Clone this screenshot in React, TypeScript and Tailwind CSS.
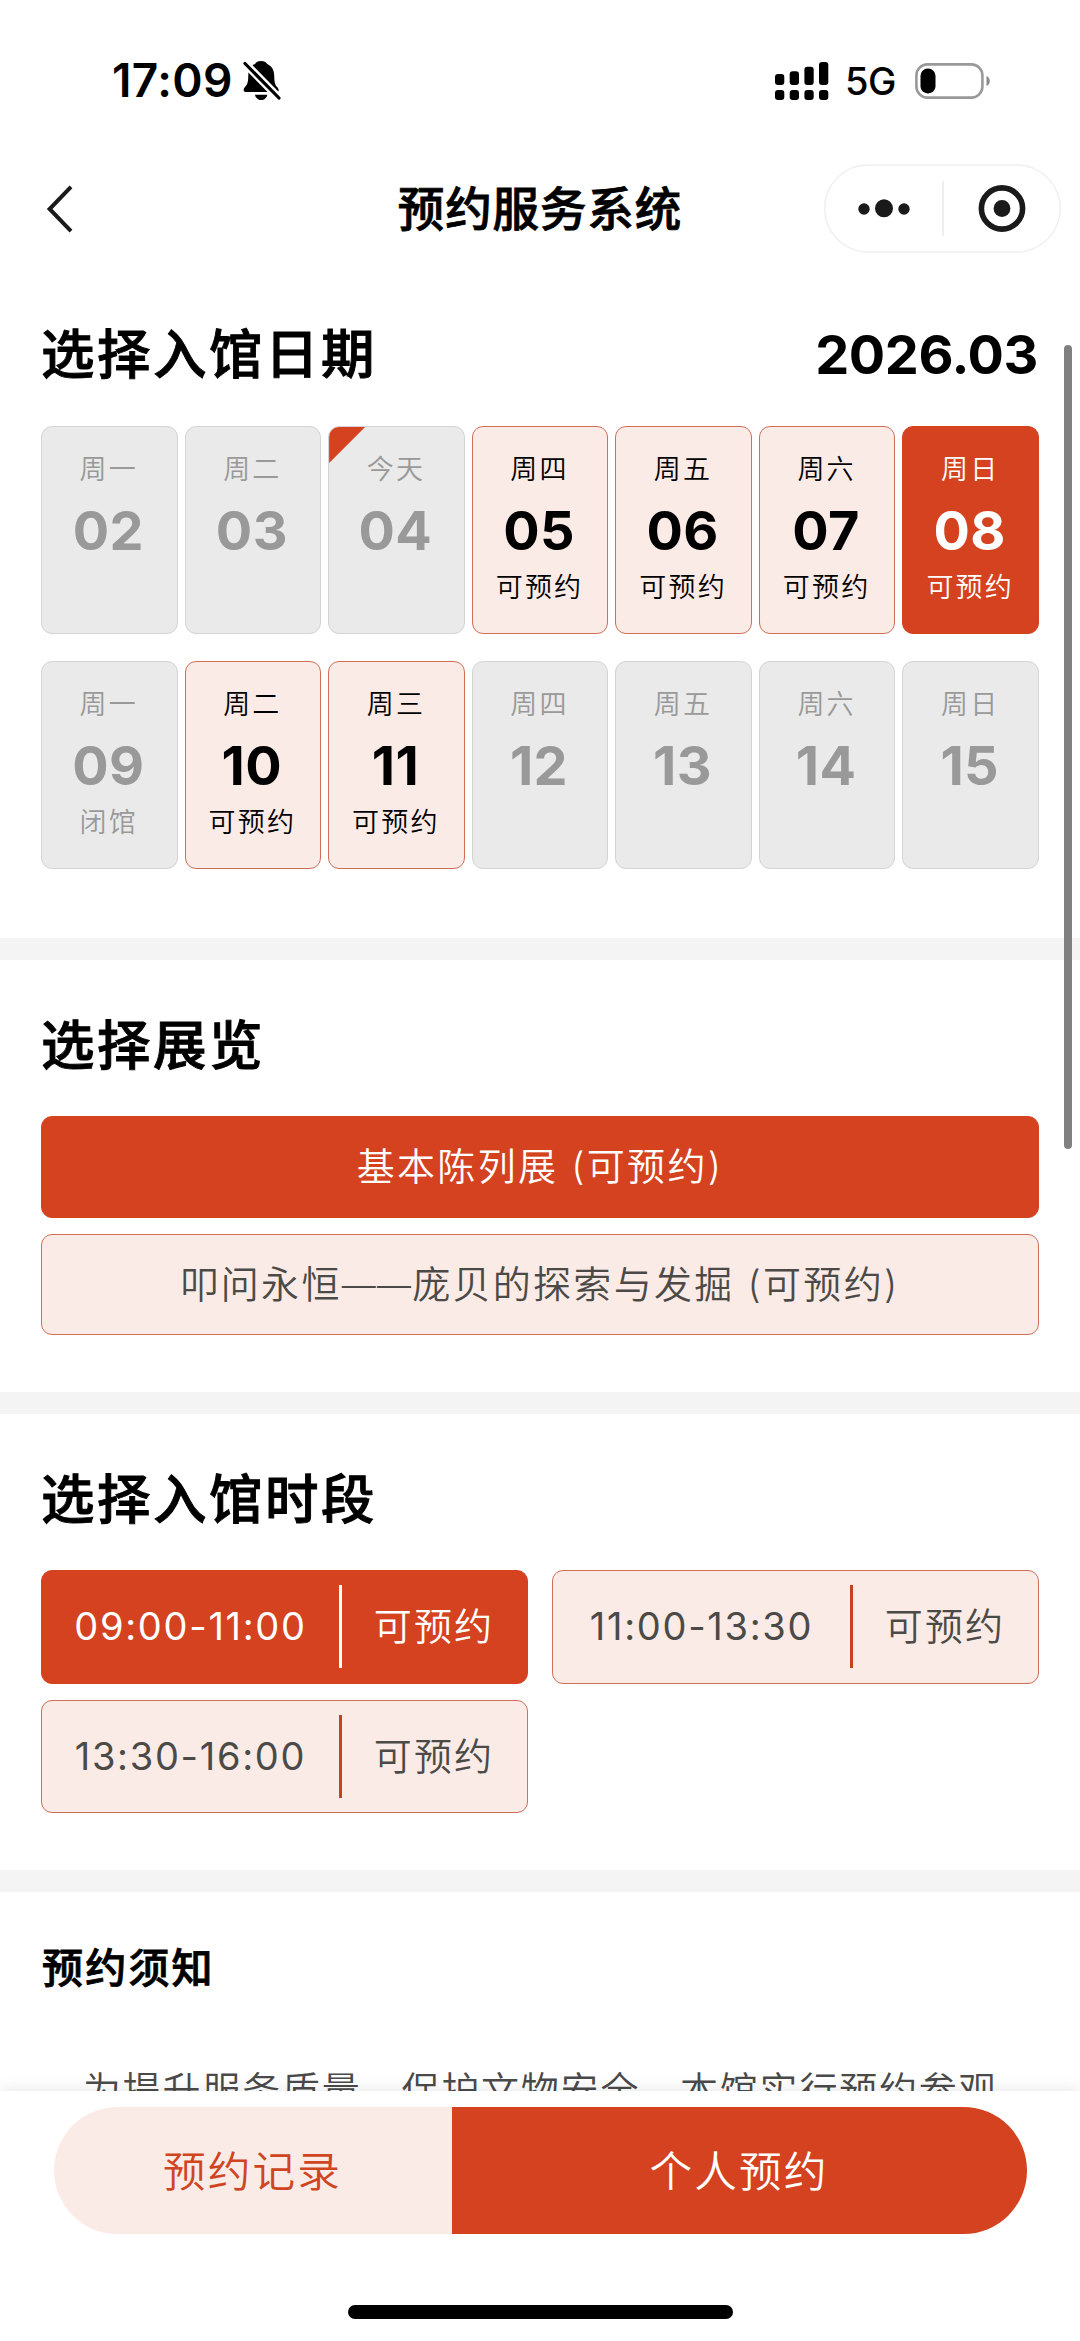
import type { ReactNode } from "react";
import { clsx } from "clsx";

type DayState = "disabled" | "open" | "selected";

interface Day {
  weekday: string;
  date: string;
  state: DayState;
  note?: string;
  isToday?: boolean;
}

const days: Day[] = [
  { weekday: "周一", date: "02", state: "disabled" },
  { weekday: "周二", date: "03", state: "disabled" },
  { weekday: "今天", date: "04", state: "disabled", isToday: true },
  { weekday: "周四", date: "05", state: "open", note: "可预约" },
  { weekday: "周五", date: "06", state: "open", note: "可预约" },
  { weekday: "周六", date: "07", state: "open", note: "可预约" },
  { weekday: "周日", date: "08", state: "selected", note: "可预约" },
  { weekday: "周一", date: "09", state: "disabled", note: "闭馆" },
  { weekday: "周二", date: "10", state: "open", note: "可预约" },
  { weekday: "周三", date: "11", state: "open", note: "可预约" },
  { weekday: "周四", date: "12", state: "disabled" },
  { weekday: "周五", date: "13", state: "disabled" },
  { weekday: "周六", date: "14", state: "disabled" },
  { weekday: "周日", date: "15", state: "disabled" }
];

const exhibitions = [
  { id: "permanent", name: <>基本陈列展 (可预约)</>, selected: true },
  {
    id: "pompeii",
    name: (
      <>
        叩问永恒<span className="text-[34px] tracking-[1.2px]">——</span>庞贝的探索与发掘 (可预约)
      </>
    ),
    selected: false
  }
];

const slots = [
  { time: "09:00-11:00", selected: true },
  { time: "11:00-13:30", selected: false },
  { time: "13:30-16:00", selected: false }
];

export default function App() {
  return (
    <div className="relative flex h-[2341px] w-[1080px] flex-col overflow-hidden bg-white font-['Inter','Noto_Sans_CJK_SC',sans-serif] text-black">
      <StatusBar />
      <NavBar />

      <main className="min-h-0 flex-1 overflow-hidden tracking-[2.2px]">
        <section className="px-[41px] pb-[69px] pt-[63px]">
          <div className="flex items-center justify-between">
            <SectionTitle>选择入馆日期</SectionTitle>
            <span className="pr-px text-[54px] font-bold leading-[72px] tracking-[-0.4px]">2026.03</span>
          </div>
          <div className="mt-[35px] grid grid-cols-7 gap-x-[7px] gap-y-[27.6px]">
            {days.map((day) => (
              <DayCard key={day.date} day={day} />
            ))}
          </div>
        </section>

        <Divider />

        <section className="px-[41px] pb-[57px] pt-[50px]">
          <SectionTitle>选择展览</SectionTitle>
          <div className="mt-[34px] flex flex-col gap-4">
            {exhibitions.map((item) => (
              <button
                key={item.id}
                className={clsx(
                  "h-[101.5px] rounded-[11px] border text-[38px] font-[350] tracking-[2.3px]",
                  item.selected
                    ? "border-[#d44220] bg-[#d44220] text-white"
                    : "border-[#cf6f58] bg-[#fbebe7] text-[#4b4a46]"
                )}
              >
                {item.name}
              </button>
            ))}
          </div>
        </section>

        <Divider />

        <section className="px-[41px] pb-[57px] pt-[50px]">
          <SectionTitle>选择入馆时段</SectionTitle>
          <div className="mt-[34px] grid grid-cols-2 gap-x-6 gap-y-4">
            {slots.map((slot) => (
              <button
                key={slot.time}
                className={clsx(
                  "flex h-[113.5px] items-center rounded-[11px] border text-[38px]",
                  slot.selected
                    ? "border-[#d44220] bg-[#d44220] text-white"
                    : "border-[#cf6f58] bg-[#fbebe7] text-[#4b4a46]"
                )}
              >
                <span className="flex-1 text-center tracking-[1.7px]">{slot.time}</span>
                <span className={clsx("h-[83px] w-[3px]", slot.selected ? "bg-white" : "bg-[#c6421f]")} />
                <span className="w-[185px] pr-px text-center font-[350]">可预约</span>
              </button>
            ))}
          </div>
        </section>

        <Divider />

        <section className="px-[42px] pt-[46px]">
          <h3 className="text-[41px] font-medium leading-[60px] [-webkit-text-stroke:0.8px]">预约须知</h3>
          <p className="mt-[62px] whitespace-nowrap pl-[41px] text-[38px] font-[350] leading-[60px] tracking-[1.8px] text-[#4b4a4a]">
            为提升服务质量、保护文物安全，本馆实行预约参观
          </p>
        </section>
      </main>

      <footer className="relative flex h-[250px] shrink-0 flex-col items-center bg-white pt-4 shadow-[0_-2px_14px_rgba(0,0,0,0.09)]">
        <div className="flex h-[127px] w-[973px] overflow-hidden rounded-full text-[42.6px] font-[350] tracking-[2.2px]">
          <button className="w-[398px] bg-[#fbebe7] pt-[2px] text-[#cf4522]">预约记录</button>
          <button className="flex-1 bg-[#d44220] pt-[2px] text-white">个人预约</button>
        </div>
        <div className="mt-[71px] h-[14px] w-[385px] rounded-full bg-black" />
      </footer>

      {/* scroll indicator */}
      <div className="absolute right-2 top-[345px] h-[804px] w-2 rounded-full bg-[#808080]" />
    </div>
  );
}

function SectionTitle({ children }: { children: ReactNode }) {
  return (
    <h2 className="text-[53.5px] font-medium leading-[72px] tracking-[2.5px] [-webkit-text-stroke:0.9px]">
      {children}
    </h2>
  );
}

function Divider() {
  return <div className="h-[22px] bg-[#f4f4f4]" />;
}

function DayCard({ day }: { day: Day }) {
  return (
    <div
      className={clsx(
        "relative flex h-[207.8px] flex-col items-center overflow-hidden rounded-[11px] border pr-px pt-[23px] text-[27px] font-[350] leading-10",
        day.state === "disabled" && "border-[#d3d3d3] bg-[#eaeaea] text-[#999999]",
        day.state === "open" && "border-[#cf6f58] bg-[#fbebe7] text-black",
        day.state === "selected" && "border-[#d44220] bg-[#d44220] text-white"
      )}
    >
      {day.isToday ? (
        <span className="absolute left-0 top-0 size-9 bg-[#d44220] [clip-path:polygon(0_0,100%_0,0_100%)]" />
      ) : null}
      <span>{day.weekday}</span>
      <span className="mt-[11px] pr-px text-[54px] font-bold leading-[60px] tracking-[0.4px]">{day.date}</span>
      {day.note ? <span className="mt-[7px]">{day.note}</span> : null}
    </div>
  );
}

function StatusBar() {
  return (
    <div className="flex h-[161px] shrink-0 items-center justify-between pl-[112px] pr-[89px]">
      <div className="flex items-center gap-[10px]">
        <span className="text-[46px] font-semibold tracking-[0.4px]">17:09</span>
        <BellOffIcon />
      </div>
      <div className="flex items-center">
        <SignalIcon />
        <span className="ml-4 w-[52px] text-[38px] font-medium leading-none tracking-[-0.5px]">5G</span>
        <BatteryIcon />
      </div>
    </div>
  );
}

function NavBar() {
  return (
    <div className="grid h-[95px] shrink-0 grid-cols-[1fr_auto_1fr] items-center px-[19px]">
      <svg className="ml-[27px]" width="28" height="50" viewBox="0 0 28 50" fill="none" stroke="#1a1a1a" strokeWidth="4">
        <path d="M25 2.8 3.6 25 25 47.2" />
      </svg>
      <h1 className="pt-[3px] text-[46.5px] font-medium tracking-[0.9px] [-webkit-text-stroke:0.8px]">预约服务系统</h1>
      <svg className="justify-self-end" width="238" height="89" viewBox="0 0 238 89" fill="none">
        <rect x="1.6" y="1" width="235.6" height="87" rx="43.5" stroke="#efefef" strokeWidth="1.4" />
        <circle cx="41" cy="45" r="5.7" fill="#1a1a1a" />
        <circle cx="61" cy="44.3" r="9" fill="#1a1a1a" />
        <circle cx="81" cy="45" r="5.7" fill="#1a1a1a" />
        <path d="M120 17v55" stroke="#ebebeb" strokeWidth="1.6" />
        <circle cx="179" cy="44.5" r="20.6" stroke="#1a1a1a" strokeWidth="5.6" />
        <circle cx="179" cy="44.5" r="8.4" fill="#1a1a1a" />
      </svg>
    </div>
  );
}

function BellOffIcon() {
  return (
    <svg width="38" height="40" viewBox="0 0 38 40">
      <path
        d="M18 0c3.300 0 5 1.300 6.200 3 5 2.200 6.800 6.300 7 11.500.2 7.500 1 9.500 3.300 12 1.300 1.400 1.900 4.500-.5 4.500H2.500c-2.600 0-2.200-3.400-.5-5 2.500-2.600 3.200-5 3.300-11.500C5.500 9 7 5 12 3c1.200-1.700 2.700-3 6-3Z"
        fill="black"
      />
      <path d="M12 33.700h12.300c-.5 3.200-3 5.300-6.100 5.300s-5.700-2.100-6.200-5.300Z" fill="black" />
      <path d="M-1-.7 38 39" stroke="white" strokeWidth="8" />
      <path d="M2 2.500 36 37" stroke="black" strokeWidth="3.200" strokeLinecap="round" />
    </svg>
  );
}

function SignalIcon() {
  return (
    <svg width="54" height="38" viewBox="0 0 54 38" fill="black">
      <rect x="0" y="12" width="9.300" height="11" rx="3" />
      <rect x="14.700" y="9.300" width="9.300" height="13.700" rx="3" />
      <rect x="29.400" y="4.700" width="9.300" height="18.300" rx="3" />
      <rect x="44" y="0" width="9.300" height="23" rx="3" />
      <rect x="0" y="28" width="9.300" height="10" rx="3" />
      <rect x="14.700" y="28" width="9.300" height="10" rx="3" />
      <rect x="29.400" y="28" width="9.300" height="10" rx="3" />
      <rect x="44" y="28" width="9.300" height="10" rx="3" />
    </svg>
  );
}

function BatteryIcon() {
  return (
    <svg className="ml-[18px]" width="76" height="36" viewBox="0 0 76 36" fill="none">
      <rect x="1.400" y="1.400" width="66" height="33.200" rx="11" stroke="#999999" strokeWidth="2.600" />
      <rect x="5.500" y="5.500" width="15" height="25" rx="7.300" fill="black" />
      <path d="M71.500 13c4.400 1.500 4.400 8.500 0 10Z" fill="#8a8a8a" />
    </svg>
  );
}
